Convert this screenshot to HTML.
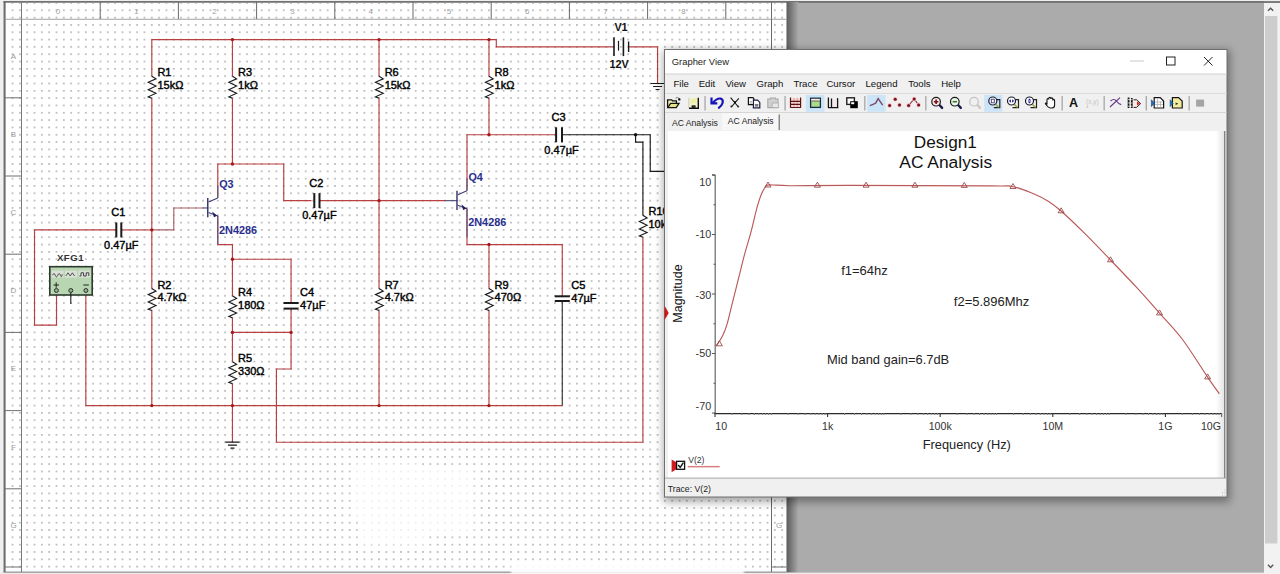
<!DOCTYPE html>
<html><head><meta charset="utf-8"><style>
html,body{margin:0;padding:0;width:1280px;height:574px;overflow:hidden;background:#ababab;}
svg{display:block;}
text{font-family:"Liberation Sans", sans-serif;}
</style></head><body>
<svg width="1280" height="574" viewBox="0 0 1280 574">
<rect x="0" y="0" width="1280" height="574" fill="#ababab"/>
<rect x="0" y="0" width="1264" height="1.1" fill="#efefef"/>
<rect x="0" y="0" width="3.6" height="574" fill="#f0f0f0"/>
<rect x="3.6" y="1.1" width="1260.4" height="1.7" fill="#6c6c6c"/>
<rect x="3.6" y="2.8" width="783" height="569.8" fill="#ffffff"/>
<defs><pattern id="dots" patternUnits="userSpaceOnUse" x="1.54" y="-0.66" width="7.33" height="7.32"><rect x="3.12" y="3.11" width="1.05" height="1.05" fill="#404040"/></pattern></defs>
<rect x="6" y="3" width="780.6" height="568.6" fill="url(#dots)"/>
<rect x="3.6" y="1.1" width="2" height="572" fill="#6c6c6c"/>
<rect x="3.6" y="571.6" width="783" height="1.4" fill="#7a7a7a"/>
<rect x="771" y="2" width="1" height="570" fill="#6a6a6a"/>
<rect x="21" y="2" width="1" height="570" fill="#7a7a7a"/>
<rect x="4" y="18.8" width="782" height="0.8" fill="#8a8a8a"/>
<rect x="99.7" y="2" width="1" height="17" fill="#6a6a6a"/>
<rect x="177.9" y="2" width="1" height="17" fill="#6a6a6a"/>
<rect x="256.1" y="2" width="1" height="17" fill="#6a6a6a"/>
<rect x="334.3" y="2" width="1" height="17" fill="#6a6a6a"/>
<rect x="412.5" y="2" width="1" height="17" fill="#6a6a6a"/>
<rect x="490.7" y="2" width="1" height="17" fill="#6a6a6a"/>
<rect x="568.9" y="2" width="1" height="17" fill="#6a6a6a"/>
<rect x="647.1" y="2" width="1" height="17" fill="#6a6a6a"/>
<rect x="725.3" y="2" width="1" height="17" fill="#6a6a6a"/>
<rect x="4" y="97.3" width="17.5" height="1" fill="#707070"/>
<rect x="771.5" y="97.3" width="15" height="1" fill="#707070"/>
<rect x="4" y="175.5" width="17.5" height="1" fill="#707070"/>
<rect x="771.5" y="175.5" width="15" height="1" fill="#707070"/>
<rect x="4" y="253.7" width="17.5" height="1" fill="#707070"/>
<rect x="771.5" y="253.7" width="15" height="1" fill="#707070"/>
<rect x="4" y="331.9" width="17.5" height="1" fill="#707070"/>
<rect x="771.5" y="331.9" width="15" height="1" fill="#707070"/>
<rect x="4" y="410.1" width="17.5" height="1" fill="#707070"/>
<rect x="771.5" y="410.1" width="15" height="1" fill="#707070"/>
<rect x="4" y="488.3" width="17.5" height="1" fill="#707070"/>
<rect x="771.5" y="488.3" width="15" height="1" fill="#707070"/>
<rect x="4" y="566.5" width="17.5" height="1" fill="#707070"/>
<rect x="771.5" y="566.5" width="15" height="1" fill="#707070"/>
<text x="58" y="14" font-size="8" fill="#a0a0a0" text-anchor="middle" font-family="'Liberation Sans', sans-serif">0</text>
<text x="136.2" y="14" font-size="8" fill="#a0a0a0" text-anchor="middle" font-family="'Liberation Sans', sans-serif">1</text>
<text x="214.4" y="14" font-size="8" fill="#a0a0a0" text-anchor="middle" font-family="'Liberation Sans', sans-serif">2</text>
<text x="292.6" y="14" font-size="8" fill="#a0a0a0" text-anchor="middle" font-family="'Liberation Sans', sans-serif">3</text>
<text x="370.8" y="14" font-size="8" fill="#a0a0a0" text-anchor="middle" font-family="'Liberation Sans', sans-serif">4</text>
<text x="449" y="14" font-size="8" fill="#a0a0a0" text-anchor="middle" font-family="'Liberation Sans', sans-serif">5</text>
<text x="527.2" y="14" font-size="8" fill="#a0a0a0" text-anchor="middle" font-family="'Liberation Sans', sans-serif">6</text>
<text x="605.4" y="14" font-size="8" fill="#a0a0a0" text-anchor="middle" font-family="'Liberation Sans', sans-serif">7</text>
<text x="683.6" y="14" font-size="8" fill="#a0a0a0" text-anchor="middle" font-family="'Liberation Sans', sans-serif">8</text>
<text x="13.5" y="58.5" font-size="8" fill="#9a9a9a" text-anchor="middle" font-family="'Liberation Sans', sans-serif">A</text>
<text x="779" y="58.5" font-size="8" fill="#9a9a9a" text-anchor="middle" font-family="'Liberation Sans', sans-serif">A</text>
<text x="13.5" y="136.7" font-size="8" fill="#9a9a9a" text-anchor="middle" font-family="'Liberation Sans', sans-serif">B</text>
<text x="779" y="136.7" font-size="8" fill="#9a9a9a" text-anchor="middle" font-family="'Liberation Sans', sans-serif">B</text>
<text x="13.5" y="214.9" font-size="8" fill="#9a9a9a" text-anchor="middle" font-family="'Liberation Sans', sans-serif">C</text>
<text x="779" y="214.9" font-size="8" fill="#9a9a9a" text-anchor="middle" font-family="'Liberation Sans', sans-serif">C</text>
<text x="13.5" y="293.1" font-size="8" fill="#9a9a9a" text-anchor="middle" font-family="'Liberation Sans', sans-serif">D</text>
<text x="779" y="293.1" font-size="8" fill="#9a9a9a" text-anchor="middle" font-family="'Liberation Sans', sans-serif">D</text>
<text x="13.5" y="371.3" font-size="8" fill="#9a9a9a" text-anchor="middle" font-family="'Liberation Sans', sans-serif">E</text>
<text x="779" y="371.3" font-size="8" fill="#9a9a9a" text-anchor="middle" font-family="'Liberation Sans', sans-serif">E</text>
<text x="13.5" y="449.5" font-size="8" fill="#9a9a9a" text-anchor="middle" font-family="'Liberation Sans', sans-serif">F</text>
<text x="779" y="449.5" font-size="8" fill="#9a9a9a" text-anchor="middle" font-family="'Liberation Sans', sans-serif">F</text>
<text x="13.5" y="527.7" font-size="8" fill="#9a9a9a" text-anchor="middle" font-family="'Liberation Sans', sans-serif">G</text>
<text x="779" y="527.7" font-size="8" fill="#9a9a9a" text-anchor="middle" font-family="'Liberation Sans', sans-serif">G</text>
<defs><linearGradient id="shr" x1="0" x2="1" y1="0" y2="0"><stop offset="0" stop-color="#5c5c5c"/><stop offset="1" stop-color="#ababab"/></linearGradient></defs>
<rect x="786.6" y="2" width="12" height="570.6" fill="url(#shr)"/>
<rect x="0" y="572.6" width="1264" height="1.4" fill="#ececec"/>
<path d="M151.8 76.2 L151.8 39.6 L496.31 39.6 L496.31 46.92 L613.59 46.92" fill="none" stroke="#b84040" stroke-width="1.15" stroke-linejoin="miter"/>
<path d="M628.25 46.92 L657.57 46.92 L657.57 83.52" fill="none" stroke="#b84040" stroke-width="1.15" stroke-linejoin="miter"/>
<path d="M151.8 98.16 L151.8 288.48" fill="none" stroke="#b84040" stroke-width="1.15" stroke-linejoin="miter"/>
<path d="M151.8 310.44 L151.8 405.6" fill="none" stroke="#b84040" stroke-width="1.15" stroke-linejoin="miter"/>
<path d="M232.43 39.6 L232.43 76.2" fill="none" stroke="#b84040" stroke-width="1.15" stroke-linejoin="miter"/>
<path d="M232.43 98.16 L232.43 164.04" fill="none" stroke="#b84040" stroke-width="1.15" stroke-linejoin="miter"/>
<path d="M217.77 197.8 L217.77 164.04 L283.74 164.04 L283.74 200.64 L311.5 200.64" fill="none" stroke="#b84040" stroke-width="1.15" stroke-linejoin="miter"/>
<path d="M319.5 200.64 L445 200.64" fill="none" stroke="#b84040" stroke-width="1.15" stroke-linejoin="miter"/>
<path d="M445 200.64 L457.5 200.64" fill="none" stroke="#50507a" stroke-width="1.15" stroke-linejoin="miter"/>
<path d="M151.8 229.92 L173.79 229.92 L173.79 207.96 L203.11 207.96" fill="none" stroke="#a86068" stroke-width="1.15" stroke-linejoin="miter"/>
<path d="M203.11 207.96 L208.3 207.96" fill="none" stroke="#50507a" stroke-width="1.15" stroke-linejoin="miter"/>
<path d="M217.77 215.8 L217.77 244.56 L232.43 244.56 L232.43 259.2 L291.07 259.2 L291.07 303" fill="none" stroke="#b84040" stroke-width="1.15" stroke-linejoin="miter"/>
<path d="M291.07 308.6 L291.07 332.4 L232.43 332.4" fill="none" stroke="#b84040" stroke-width="1.15" stroke-linejoin="miter"/>
<path d="M232.43 259.2 L232.43 295.8" fill="none" stroke="#b84040" stroke-width="1.15" stroke-linejoin="miter"/>
<path d="M232.43 317.76 L232.43 361.68" fill="none" stroke="#b84040" stroke-width="1.15" stroke-linejoin="miter"/>
<path d="M232.43 383.64 L232.43 442.2" fill="none" stroke="#b84040" stroke-width="1.15" stroke-linejoin="miter"/>
<path d="M291.07 332.4 L291.07 369 L276.41 369 L276.41 442.2 L642.91 442.2 L642.91 237.24" fill="none" stroke="#b84040" stroke-width="1.15" stroke-linejoin="miter"/>
<path d="M85.83 292.5 L85.83 405.6 L562.28 405.6" fill="none" stroke="#b84040" stroke-width="1.15" stroke-linejoin="miter"/>
<path d="M56.51 292.5 L56.51 325.08 L34.52 325.08 L34.52 229.92 L116.3 229.92" fill="none" stroke="#b84040" stroke-width="1.15" stroke-linejoin="miter"/>
<path d="M121.3 229.92 L151.8 229.92" fill="none" stroke="#b84040" stroke-width="1.15" stroke-linejoin="miter"/>
<path d="M379.03 39.6 L379.03 76.2" fill="none" stroke="#b84040" stroke-width="1.15" stroke-linejoin="miter"/>
<path d="M379.03 98.16 L379.03 288.48" fill="none" stroke="#b84040" stroke-width="1.15" stroke-linejoin="miter"/>
<path d="M379.03 310.44 L379.03 405.6" fill="none" stroke="#b84040" stroke-width="1.15" stroke-linejoin="miter"/>
<path d="M488.98 39.6 L488.98 76.2" fill="none" stroke="#b84040" stroke-width="1.15" stroke-linejoin="miter"/>
<path d="M488.98 98.16 L488.98 134.76" fill="none" stroke="#b84040" stroke-width="1.15" stroke-linejoin="miter"/>
<path d="M466.99 190.5 L466.99 134.76 L556.1 134.76" fill="none" stroke="#b84040" stroke-width="1.15" stroke-linejoin="miter"/>
<path d="M562 134.76 L650.24 134.76 L650.24 171.36 L679.56 171.36" fill="none" stroke="#1a1a1a" stroke-width="1.15" stroke-linejoin="miter"/>
<path d="M635.58 134.76 L635.58 142.08 L642.91 142.08 L642.91 215.28" fill="none" stroke="#1a1a1a" stroke-width="1.15" stroke-linejoin="miter"/>
<path d="M466.99 208.5 L466.99 244.56 L562.28 244.56 L562.28 296.3" fill="none" stroke="#b84040" stroke-width="1.15" stroke-linejoin="miter"/>
<path d="M562.28 301 L562.28 405.6" fill="none" stroke="#3a3030" stroke-width="1.15" stroke-linejoin="miter"/>
<path d="M488.98 244.56 L488.98 288.48" fill="none" stroke="#b84040" stroke-width="1.15" stroke-linejoin="miter"/>
<path d="M488.98 310.44 L488.98 405.6" fill="none" stroke="#b84040" stroke-width="1.15" stroke-linejoin="miter"/>
<circle cx="232.43" cy="39.6" r="1.7" fill="#a81818"/>
<circle cx="379.03" cy="39.6" r="1.7" fill="#a81818"/>
<circle cx="488.98" cy="39.6" r="1.7" fill="#a81818"/>
<circle cx="232.43" cy="164.04" r="1.7" fill="#a81818"/>
<circle cx="151.8" cy="229.92" r="1.7" fill="#a81818"/>
<circle cx="379.03" cy="200.64" r="1.7" fill="#a81818"/>
<circle cx="488.98" cy="134.76" r="1.7" fill="#a81818"/>
<circle cx="488.98" cy="244.56" r="1.7" fill="#a81818"/>
<circle cx="232.43" cy="259.2" r="1.7" fill="#a81818"/>
<circle cx="232.43" cy="332.4" r="1.7" fill="#a81818"/>
<circle cx="291.07" cy="332.4" r="1.7" fill="#a81818"/>
<circle cx="151.8" cy="405.6" r="1.7" fill="#a81818"/>
<circle cx="232.43" cy="405.6" r="1.7" fill="#a81818"/>
<circle cx="379.03" cy="405.6" r="1.7" fill="#a81818"/>
<circle cx="488.98" cy="405.6" r="1.7" fill="#a81818"/>
<circle cx="635.58" cy="134.76" r="1.7" fill="#111"/>
<path d="M151.8 76.2 L156 78.84 L148.2 82.35 L156 86.09 L148.2 89.82 L156 93.34 L148.2 96.86 L151.8 98.18" fill="none" stroke="#1a1a1a" stroke-width="1.1" stroke-linejoin="miter"/>
<text x="157.4" y="76.4" font-size="11" fill="#000" text-anchor="start" font-weight="normal" font-family="'Liberation Sans', sans-serif" stroke="#000" stroke-width="0.4">R1</text>
<text x="157.4" y="89.2" font-size="11" fill="#000" text-anchor="start" font-weight="normal" font-family="'Liberation Sans', sans-serif" stroke="#000" stroke-width="0.4">15k&#937;</text>
<path d="M232.43 76.2 L236.63 78.84 L228.83 82.35 L236.63 86.09 L228.83 89.82 L236.63 93.34 L228.83 96.86 L232.43 98.18" fill="none" stroke="#1a1a1a" stroke-width="1.1" stroke-linejoin="miter"/>
<text x="238.03" y="76.4" font-size="11" fill="#000" text-anchor="start" font-weight="normal" font-family="'Liberation Sans', sans-serif" stroke="#000" stroke-width="0.4">R3</text>
<text x="238.03" y="89.2" font-size="11" fill="#000" text-anchor="start" font-weight="normal" font-family="'Liberation Sans', sans-serif" stroke="#000" stroke-width="0.4">1k&#937;</text>
<path d="M379.03 76.2 L383.23 78.84 L375.43 82.35 L383.23 86.09 L375.43 89.82 L383.23 93.34 L375.43 96.86 L379.03 98.18" fill="none" stroke="#1a1a1a" stroke-width="1.1" stroke-linejoin="miter"/>
<text x="384.63" y="76.4" font-size="11" fill="#000" text-anchor="start" font-weight="normal" font-family="'Liberation Sans', sans-serif" stroke="#000" stroke-width="0.4">R6</text>
<text x="384.63" y="89.2" font-size="11" fill="#000" text-anchor="start" font-weight="normal" font-family="'Liberation Sans', sans-serif" stroke="#000" stroke-width="0.4">15k&#937;</text>
<path d="M488.98 76.2 L493.18 78.84 L485.38 82.35 L493.18 86.09 L485.38 89.82 L493.18 93.34 L485.38 96.86 L488.98 98.18" fill="none" stroke="#1a1a1a" stroke-width="1.1" stroke-linejoin="miter"/>
<text x="494.58" y="76.4" font-size="11" fill="#000" text-anchor="start" font-weight="normal" font-family="'Liberation Sans', sans-serif" stroke="#000" stroke-width="0.4">R8</text>
<text x="494.58" y="89.2" font-size="11" fill="#000" text-anchor="start" font-weight="normal" font-family="'Liberation Sans', sans-serif" stroke="#000" stroke-width="0.4">1k&#937;</text>
<path d="M151.8 288.48 L156 291.12 L148.2 294.63 L156 298.37 L148.2 302.1 L156 305.62 L148.2 309.14 L151.8 310.46" fill="none" stroke="#1a1a1a" stroke-width="1.1" stroke-linejoin="miter"/>
<text x="157.4" y="288.68" font-size="11" fill="#000" text-anchor="start" font-weight="normal" font-family="'Liberation Sans', sans-serif" stroke="#000" stroke-width="0.4">R2</text>
<text x="157.4" y="301.48" font-size="11" fill="#000" text-anchor="start" font-weight="normal" font-family="'Liberation Sans', sans-serif" stroke="#000" stroke-width="0.4">4.7k&#937;</text>
<path d="M379.03 288.48 L383.23 291.12 L375.43 294.63 L383.23 298.37 L375.43 302.1 L383.23 305.62 L375.43 309.14 L379.03 310.46" fill="none" stroke="#1a1a1a" stroke-width="1.1" stroke-linejoin="miter"/>
<text x="384.63" y="288.68" font-size="11" fill="#000" text-anchor="start" font-weight="normal" font-family="'Liberation Sans', sans-serif" stroke="#000" stroke-width="0.4">R7</text>
<text x="384.63" y="301.48" font-size="11" fill="#000" text-anchor="start" font-weight="normal" font-family="'Liberation Sans', sans-serif" stroke="#000" stroke-width="0.4">4.7k&#937;</text>
<path d="M488.98 288.48 L493.18 291.12 L485.38 294.63 L493.18 298.37 L485.38 302.1 L493.18 305.62 L485.38 309.14 L488.98 310.46" fill="none" stroke="#1a1a1a" stroke-width="1.1" stroke-linejoin="miter"/>
<text x="494.58" y="288.68" font-size="11" fill="#000" text-anchor="start" font-weight="normal" font-family="'Liberation Sans', sans-serif" stroke="#000" stroke-width="0.4">R9</text>
<text x="494.58" y="301.48" font-size="11" fill="#000" text-anchor="start" font-weight="normal" font-family="'Liberation Sans', sans-serif" stroke="#000" stroke-width="0.4">470&#937;</text>
<path d="M232.43 295.8 L236.63 298.44 L228.83 301.95 L236.63 305.69 L228.83 309.42 L236.63 312.94 L228.83 316.46 L232.43 317.78" fill="none" stroke="#1a1a1a" stroke-width="1.1" stroke-linejoin="miter"/>
<text x="238.03" y="296" font-size="11" fill="#000" text-anchor="start" font-weight="normal" font-family="'Liberation Sans', sans-serif" stroke="#000" stroke-width="0.4">R4</text>
<text x="238.03" y="308.8" font-size="11" fill="#000" text-anchor="start" font-weight="normal" font-family="'Liberation Sans', sans-serif" stroke="#000" stroke-width="0.4">180&#937;</text>
<path d="M232.43 361.68 L236.63 364.32 L228.83 367.83 L236.63 371.57 L228.83 375.3 L236.63 378.82 L228.83 382.34 L232.43 383.66" fill="none" stroke="#1a1a1a" stroke-width="1.1" stroke-linejoin="miter"/>
<text x="238.03" y="361.88" font-size="11" fill="#000" text-anchor="start" font-weight="normal" font-family="'Liberation Sans', sans-serif" stroke="#000" stroke-width="0.4">R5</text>
<text x="238.03" y="374.68" font-size="11" fill="#000" text-anchor="start" font-weight="normal" font-family="'Liberation Sans', sans-serif" stroke="#000" stroke-width="0.4">330&#937;</text>
<path d="M642.91 215.28 L647.11 217.92 L639.31 221.43 L647.11 225.17 L639.31 228.9 L647.11 232.42 L639.31 235.94 L642.91 237.25" fill="none" stroke="#1a1a1a" stroke-width="1.1" stroke-linejoin="miter"/>
<text x="648.51" y="215.48" font-size="11" fill="#000" text-anchor="start" font-weight="normal" font-family="'Liberation Sans', sans-serif" stroke="#000" stroke-width="0.4">R10</text>
<text x="648.51" y="228.28" font-size="11" fill="#000" text-anchor="start" font-weight="normal" font-family="'Liberation Sans', sans-serif" stroke="#000" stroke-width="0.4">10k</text>
<rect x="115.3" y="222.42" width="2" height="15" fill="#1a1a1a"/>
<rect x="120.3" y="222.42" width="2" height="15" fill="#1a1a1a"/>
<text x="118.3" y="216.12" font-size="11" fill="#000" text-anchor="middle" font-weight="normal" font-family="'Liberation Sans', sans-serif" stroke="#000" stroke-width="0.4">C1</text>
<text x="121.3" y="248.72" font-size="11" fill="#000" text-anchor="middle" font-weight="normal" font-family="'Liberation Sans', sans-serif" stroke="#000" stroke-width="0.4">0.47&#181;F</text>
<rect x="313.3" y="193.14" width="2" height="15" fill="#1a1a1a"/>
<rect x="318.5" y="193.14" width="2" height="15" fill="#1a1a1a"/>
<text x="316.4" y="186.84" font-size="11" fill="#000" text-anchor="middle" font-weight="normal" font-family="'Liberation Sans', sans-serif" stroke="#000" stroke-width="0.4">C2</text>
<text x="319.4" y="219.44" font-size="11" fill="#000" text-anchor="middle" font-weight="normal" font-family="'Liberation Sans', sans-serif" stroke="#000" stroke-width="0.4">0.47&#181;F</text>
<rect x="555.1" y="127.26" width="2" height="15" fill="#1a1a1a"/>
<rect x="561" y="127.26" width="2" height="15" fill="#1a1a1a"/>
<text x="558.55" y="120.96" font-size="11" fill="#000" text-anchor="middle" font-weight="normal" font-family="'Liberation Sans', sans-serif" stroke="#000" stroke-width="0.4">C3</text>
<text x="561.55" y="153.56" font-size="11" fill="#000" text-anchor="middle" font-weight="normal" font-family="'Liberation Sans', sans-serif" stroke="#000" stroke-width="0.4">0.47&#181;F</text>
<rect x="283.57" y="302" width="15" height="2" fill="#1a1a1a"/>
<rect x="283.57" y="307.6" width="15" height="2" fill="#1a1a1a"/>
<text x="300.07" y="296.2" font-size="11" fill="#000" text-anchor="start" font-weight="normal" font-family="'Liberation Sans', sans-serif" stroke="#000" stroke-width="0.4">C4</text>
<text x="300.07" y="309.4" font-size="11" fill="#000" text-anchor="start" font-weight="normal" font-family="'Liberation Sans', sans-serif" stroke="#000" stroke-width="0.4">47&#181;F</text>
<rect x="554.78" y="295.3" width="15" height="2" fill="#1a1a1a"/>
<rect x="554.78" y="300" width="15" height="2" fill="#1a1a1a"/>
<text x="571.28" y="289.05" font-size="11" fill="#000" text-anchor="start" font-weight="normal" font-family="'Liberation Sans', sans-serif" stroke="#000" stroke-width="0.4">C5</text>
<text x="571.28" y="302.25" font-size="11" fill="#000" text-anchor="start" font-weight="normal" font-family="'Liberation Sans', sans-serif" stroke="#000" stroke-width="0.4">47&#181;F</text>
<path d="M217.77 197.96 V185.96" fill="none" stroke="#55557e" stroke-width="1.1"/>
<path d="M217.77 215.96 V243.96" fill="none" stroke="#55557e" stroke-width="1.1"/>
<path d="M207.77 197.96 V217.26" stroke="#2e2e68" stroke-width="1.4"/>
<path d="M208.57 202.06 L217.77 197.96" fill="none" stroke="#3e3e74" stroke-width="1.1"/>
<path d="M208.57 212.46 L217.77 215.96" fill="none" stroke="#3e3e74" stroke-width="1.1"/>
<path d="M217.17 215.76 L212.17 211.56 L213.97 217.36 Z" fill="#1e1e60"/>
<text x="219.17" y="187.96" font-size="10.8" fill="#2a2f8f" text-anchor="start" font-weight="bold" font-family="'Liberation Sans', sans-serif" >Q3</text>
<text x="218.97" y="233.76" font-size="10.9" fill="#2a2f8f" text-anchor="start" font-weight="bold" font-family="'Liberation Sans', sans-serif" >2N4286</text>
<path d="M466.99 190.64 V178.64" fill="none" stroke="#55557e" stroke-width="1.1"/>
<path d="M466.99 208.64 V236.64" fill="none" stroke="#55557e" stroke-width="1.1"/>
<path d="M456.99 190.64 V209.94" stroke="#2e2e68" stroke-width="1.4"/>
<path d="M457.79 194.74 L466.99 190.64" fill="none" stroke="#3e3e74" stroke-width="1.1"/>
<path d="M457.79 205.14 L466.99 208.64" fill="none" stroke="#3e3e74" stroke-width="1.1"/>
<path d="M466.39 208.44 L461.39 204.24 L463.19 210.04 Z" fill="#1e1e60"/>
<text x="468.39" y="180.64" font-size="10.8" fill="#2a2f8f" text-anchor="start" font-weight="bold" font-family="'Liberation Sans', sans-serif" >Q4</text>
<text x="468.19" y="226.44" font-size="10.9" fill="#2a2f8f" text-anchor="start" font-weight="bold" font-family="'Liberation Sans', sans-serif" >2N4286</text>
<path d="M614 37.3 V56.1" stroke="#1a1a1a" stroke-width="1.6"/>
<path d="M618.5 40.8 V50.6" stroke="#1a1a1a" stroke-width="1.2"/>
<path d="M623.4 37.3 V56.1" stroke="#1a1a1a" stroke-width="1.6"/>
<path d="M628.6 41.5 V52" stroke="#1a1a1a" stroke-width="1.4"/>
<text x="621" y="31" font-size="10.8" fill="#111" text-anchor="middle" font-weight="bold" font-family="'Liberation Sans', sans-serif" >V1</text>
<text x="619" y="67.7" font-size="10.8" fill="#111" text-anchor="middle" font-weight="bold" font-family="'Liberation Sans', sans-serif" >12V</text>
<path d="M650.57 83.52 H664.57 M653.07 86.52 H662.07 M655.57 89.52 H659.57" stroke="#1a1a1a" stroke-width="1.2"/>
<path d="M225.43 442.2 H239.43 M227.93 445.2 H236.93 M230.43 448.2 H234.43" stroke="#1a1a1a" stroke-width="1.2"/>
<rect x="49.8" y="266.7" width="42.4" height="28.3" fill="#b9d6b2" stroke="#2e3a2e" stroke-width="1.6"/>
<rect x="51.5" y="270.6" width="12" height="7" fill="#d9e0d6"/>
<rect x="65" y="270.6" width="12" height="7" fill="#d9e0d6"/>
<rect x="78.5" y="270.6" width="12" height="7" fill="#d9e0d6"/>
<path d="M52.6 275.2 q1.3 -3.4 2.6 0 t2.6 0 t2.6 0 t1.8 -1" fill="none" stroke="#444" stroke-width="0.9"/>
<path d="M65.8 276 l2.2 -3.2 l2.2 3.2 l2.2 -3.2 l2.2 3.2" fill="none" stroke="#444" stroke-width="0.9"/>
<path d="M79.4 276 h1.6 v-3.2 h2.6 v3.2 h2.6 v-3.2 h2.6 v3.2" fill="none" stroke="#333" stroke-width="0.9"/>
<circle cx="56.4" cy="290.5" r="2" fill="#8fb089" stroke="#333" stroke-width="1"/>
<circle cx="70.8" cy="290.5" r="2" fill="#8fb089" stroke="#333" stroke-width="1"/>
<circle cx="85.9" cy="290.5" r="2" fill="#8fb089" stroke="#333" stroke-width="1"/>
<path d="M53.5 285 h5.5 M56.2 282.3 v5.5 M83.3 285 h5.5" stroke="#222" stroke-width="1"/>
<path d="M56.4 292.5 V292.48 M70.8 292.5 V304 M85.9 292.5 V292.48" stroke="#222" stroke-width="1.1"/>
<text x="70.5" y="260.5" font-size="9.6" fill="#333" text-anchor="middle" font-weight="bold" font-family="'Liberation Serif', serif" letter-spacing="0.5">XFG1</text>
<defs><filter id="soft" x="-5%" y="-5%" width="110%" height="110%"><feGaussianBlur stdDeviation="1.2"/></filter></defs>
<path d="M356 463.4 H422 V469 H474 V532.4 H427 V545 H358 V517 H351.5 V470 Z" fill="#ffffff" opacity="0.75" filter="url(#soft)"/>
<rect x="511" y="563" width="233" height="11" fill="#ffffff" opacity="0.9" filter="url(#soft)"/>
<rect x="1264" y="2.8" width="16" height="571.2" fill="#f2f2f2"/><rect x="1264" y="1.1" width="16" height="1.7" fill="#6c6c6c"/><rect x="1264" y="0" width="16" height="1.1" fill="#efefef"/>
<rect x="1265" y="16" width="12.3" height="527.5" fill="#cdcdcd"/>
<path d="M1268 10.8 L1270.6 8.2 L1273.2 10.8" fill="none" stroke="#555" stroke-width="1.4"/>
<path d="M1268 564.8 L1270.6 567.4 L1273.2 564.8" fill="none" stroke="#555" stroke-width="1.4"/>
<defs><filter id="blur" x="-10%" y="-10%" width="120%" height="120%"><feGaussianBlur stdDeviation="4"/></filter></defs>
<rect x="663.5" y="50" width="566.5" height="452" fill="#000" opacity="0.35" filter="url(#blur)"/>
<rect x="664.5" y="49" width="562.5" height="448" fill="#f0f0f0"/>
<rect x="664.5" y="49" width="562.5" height="25" fill="#ffffff"/>
<rect x="664.5" y="49.5" width="562.5" height="447.5" fill="none" stroke="#6f6f6f" stroke-width="1"/>
<text x="671.8" y="65" font-size="9.4" fill="#222" text-anchor="start" font-weight="normal" font-family="'Liberation Sans', sans-serif" >Grapher View</text>
<path d="M1130 61 H1144" stroke="#c8c8c8" stroke-width="1"/>
<rect x="1166.5" y="57" width="8.5" height="8" fill="none" stroke="#222" stroke-width="1"/>
<path d="M1204 57 L1212.5 65.5 M1212.5 57 L1204 65.5" stroke="#222" stroke-width="1"/>
<rect x="665" y="73.6" width="562" height="0.8" fill="#c8c8c8"/>
<rect x="665" y="93" width="562" height="0.8" fill="#d6d6d6"/>
<rect x="665" y="112" width="562" height="0.8" fill="#d0d0d0"/>
<text x="673.4" y="87.2" font-size="9.6" fill="#111" text-anchor="start" font-weight="normal" font-family="'Liberation Sans', sans-serif" >File</text>
<text x="698.7" y="87.2" font-size="9.6" fill="#111" text-anchor="start" font-weight="normal" font-family="'Liberation Sans', sans-serif" >Edit</text>
<text x="725.4" y="87.2" font-size="9.6" fill="#111" text-anchor="start" font-weight="normal" font-family="'Liberation Sans', sans-serif" >View</text>
<text x="756.6" y="87.2" font-size="9.6" fill="#111" text-anchor="start" font-weight="normal" font-family="'Liberation Sans', sans-serif" >Graph</text>
<text x="793.4" y="87.2" font-size="9.6" fill="#111" text-anchor="start" font-weight="normal" font-family="'Liberation Sans', sans-serif" >Trace</text>
<text x="826.4" y="87.2" font-size="9.6" fill="#111" text-anchor="start" font-weight="normal" font-family="'Liberation Sans', sans-serif" >Cursor</text>
<text x="865.5" y="87.2" font-size="9.6" fill="#111" text-anchor="start" font-weight="normal" font-family="'Liberation Sans', sans-serif" >Legend</text>
<text x="908.2" y="87.2" font-size="9.6" fill="#111" text-anchor="start" font-weight="normal" font-family="'Liberation Sans', sans-serif" >Tools</text>
<text x="941.2" y="87.2" font-size="9.6" fill="#111" text-anchor="start" font-weight="normal" font-family="'Liberation Sans', sans-serif" >Help</text>
<text x="672" y="125.6" font-size="8.6" fill="#222" text-anchor="start" font-weight="normal" font-family="'Liberation Sans', sans-serif" >AC Analysis</text>
<rect x="722" y="113" width="57" height="17" fill="#f7f7f7"/>
<text x="727.8" y="124.4" font-size="8.6" fill="#222" text-anchor="start" font-weight="normal" font-family="'Liberation Sans', sans-serif" >AC Analysis</text>
<rect x="778.6" y="114.5" width="1.2" height="15.5" fill="#707070"/>
<rect x="665.5" y="131" width="558" height="347" fill="#ffffff"/>
<rect x="665.5" y="131" width="2.6" height="347" fill="#f0f0f0"/>
<defs><linearGradient id="inr" x1="0" x2="1"><stop offset="0" stop-color="#fff"/><stop offset="1" stop-color="#e4e4e4"/></linearGradient></defs>
<rect x="1216" y="131" width="8.4" height="347" fill="url(#inr)"/>
<rect x="1224.2" y="131" width="1.1" height="347" fill="#6a6a6a"/>
<rect x="665" y="477.6" width="562" height="1" fill="#a8a8a8"/>
<text x="667.8" y="492.2" font-size="8.7" fill="#222" text-anchor="start" font-weight="normal" font-family="'Liberation Sans', sans-serif" >Trace: V(2)</text>
<rect x="1222" y="494.5" width="1" height="1" fill="#b8b8b8"/>
<rect x="1224.5" y="494.5" width="1" height="1" fill="#b8b8b8"/>
<rect x="1224.5" y="492" width="1" height="1" fill="#b8b8b8"/>
<rect x="1222" y="492" width="1" height="1" fill="#b8b8b8"/>
<rect x="1224.5" y="489.5" width="1" height="1" fill="#b8b8b8"/>
<text x="945.3" y="147.9" font-size="17.2" fill="#111" text-anchor="middle" font-weight="normal" font-family="'Liberation Sans', sans-serif" >Design1</text>
<text x="945.7" y="167.7" font-size="17.4" fill="#111" text-anchor="middle" font-weight="normal" font-family="'Liberation Sans', sans-serif" >AC Analysis</text>
<path d="M715.2 175 V413.6" fill="none" stroke="#666" stroke-width="1.2"/><path d="M714.6 413.6 H1221" fill="none" stroke="#2a2a2a" stroke-width="1.2"/>
<path d="M712 175 H715.2" stroke="#555" stroke-width="1.2"/>
<path d="M712 175 H715.2" stroke="#555" stroke-width="1"/>
<path d="M712 234.5 H715.2" stroke="#555" stroke-width="1"/>
<path d="M712 294 H715.2" stroke="#555" stroke-width="1"/>
<path d="M712 353.5 H715.2" stroke="#555" stroke-width="1"/>
<path d="M712 413 H715.2" stroke="#555" stroke-width="1"/>
<path d="M713.5 204.75 H715.2" stroke="#555" stroke-width="1"/>
<path d="M713.5 264.25 H715.2" stroke="#555" stroke-width="1"/>
<path d="M713.5 323.75 H715.2" stroke="#555" stroke-width="1"/>
<path d="M713.5 383.25 H715.2" stroke="#555" stroke-width="1"/>
<text x="711.2" y="185.6" font-size="10.8" fill="#333" text-anchor="end" font-weight="normal" font-family="'Liberation Sans', sans-serif" >10</text>
<text x="711.2" y="238" font-size="10.8" fill="#333" text-anchor="end" font-weight="normal" font-family="'Liberation Sans', sans-serif" >-10</text>
<text x="711.2" y="298.5" font-size="10.8" fill="#333" text-anchor="end" font-weight="normal" font-family="'Liberation Sans', sans-serif" >-30</text>
<text x="711.2" y="357" font-size="10.8" fill="#333" text-anchor="end" font-weight="normal" font-family="'Liberation Sans', sans-serif" >-50</text>
<text x="711.2" y="410" font-size="10.8" fill="#333" text-anchor="end" font-weight="normal" font-family="'Liberation Sans', sans-serif" >-70</text>
<path d="M715 413 V417" stroke="#333" stroke-width="1.1"/>
<path d="M731.95 413 V415" stroke="#777" stroke-width="1"/>
<path d="M741.86 413 V415" stroke="#777" stroke-width="1"/>
<path d="M748.9 413 V415" stroke="#777" stroke-width="1"/>
<path d="M754.35 413 V415" stroke="#777" stroke-width="1"/>
<path d="M758.81 413 V415" stroke="#777" stroke-width="1"/>
<path d="M762.58 413 V415" stroke="#777" stroke-width="1"/>
<path d="M765.84 413 V415" stroke="#777" stroke-width="1"/>
<path d="M768.72 413 V415" stroke="#777" stroke-width="1"/>
<path d="M771.3 413 V415" stroke="#777" stroke-width="1"/>
<path d="M788.25 413 V415" stroke="#777" stroke-width="1"/>
<path d="M798.16 413 V415" stroke="#777" stroke-width="1"/>
<path d="M805.2 413 V415" stroke="#777" stroke-width="1"/>
<path d="M810.65 413 V415" stroke="#777" stroke-width="1"/>
<path d="M815.11 413 V415" stroke="#777" stroke-width="1"/>
<path d="M818.88 413 V415" stroke="#777" stroke-width="1"/>
<path d="M822.14 413 V415" stroke="#777" stroke-width="1"/>
<path d="M825.02 413 V415" stroke="#777" stroke-width="1"/>
<path d="M827.6 413 V417" stroke="#333" stroke-width="1.1"/>
<path d="M844.55 413 V415" stroke="#777" stroke-width="1"/>
<path d="M854.46 413 V415" stroke="#777" stroke-width="1"/>
<path d="M861.5 413 V415" stroke="#777" stroke-width="1"/>
<path d="M866.95 413 V415" stroke="#777" stroke-width="1"/>
<path d="M871.41 413 V415" stroke="#777" stroke-width="1"/>
<path d="M875.18 413 V415" stroke="#777" stroke-width="1"/>
<path d="M878.44 413 V415" stroke="#777" stroke-width="1"/>
<path d="M881.32 413 V415" stroke="#777" stroke-width="1"/>
<path d="M883.9 413 V415" stroke="#777" stroke-width="1"/>
<path d="M900.85 413 V415" stroke="#777" stroke-width="1"/>
<path d="M910.76 413 V415" stroke="#777" stroke-width="1"/>
<path d="M917.8 413 V415" stroke="#777" stroke-width="1"/>
<path d="M923.25 413 V415" stroke="#777" stroke-width="1"/>
<path d="M927.71 413 V415" stroke="#777" stroke-width="1"/>
<path d="M931.48 413 V415" stroke="#777" stroke-width="1"/>
<path d="M934.74 413 V415" stroke="#777" stroke-width="1"/>
<path d="M937.62 413 V415" stroke="#777" stroke-width="1"/>
<path d="M940.2 413 V417" stroke="#333" stroke-width="1.1"/>
<path d="M957.15 413 V415" stroke="#777" stroke-width="1"/>
<path d="M967.06 413 V415" stroke="#777" stroke-width="1"/>
<path d="M974.1 413 V415" stroke="#777" stroke-width="1"/>
<path d="M979.55 413 V415" stroke="#777" stroke-width="1"/>
<path d="M984.01 413 V415" stroke="#777" stroke-width="1"/>
<path d="M987.78 413 V415" stroke="#777" stroke-width="1"/>
<path d="M991.04 413 V415" stroke="#777" stroke-width="1"/>
<path d="M993.92 413 V415" stroke="#777" stroke-width="1"/>
<path d="M996.5 413 V415" stroke="#777" stroke-width="1"/>
<path d="M1013.45 413 V415" stroke="#777" stroke-width="1"/>
<path d="M1023.36 413 V415" stroke="#777" stroke-width="1"/>
<path d="M1030.4 413 V415" stroke="#777" stroke-width="1"/>
<path d="M1035.85 413 V415" stroke="#777" stroke-width="1"/>
<path d="M1040.31 413 V415" stroke="#777" stroke-width="1"/>
<path d="M1044.08 413 V415" stroke="#777" stroke-width="1"/>
<path d="M1047.34 413 V415" stroke="#777" stroke-width="1"/>
<path d="M1050.22 413 V415" stroke="#777" stroke-width="1"/>
<path d="M1052.8 413 V417" stroke="#333" stroke-width="1.1"/>
<path d="M1069.75 413 V415" stroke="#777" stroke-width="1"/>
<path d="M1079.66 413 V415" stroke="#777" stroke-width="1"/>
<path d="M1086.7 413 V415" stroke="#777" stroke-width="1"/>
<path d="M1092.15 413 V415" stroke="#777" stroke-width="1"/>
<path d="M1096.61 413 V415" stroke="#777" stroke-width="1"/>
<path d="M1100.38 413 V415" stroke="#777" stroke-width="1"/>
<path d="M1103.64 413 V415" stroke="#777" stroke-width="1"/>
<path d="M1106.52 413 V415" stroke="#777" stroke-width="1"/>
<path d="M1109.1 413 V415" stroke="#777" stroke-width="1"/>
<path d="M1126.05 413 V415" stroke="#777" stroke-width="1"/>
<path d="M1135.96 413 V415" stroke="#777" stroke-width="1"/>
<path d="M1143 413 V415" stroke="#777" stroke-width="1"/>
<path d="M1148.45 413 V415" stroke="#777" stroke-width="1"/>
<path d="M1152.91 413 V415" stroke="#777" stroke-width="1"/>
<path d="M1156.68 413 V415" stroke="#777" stroke-width="1"/>
<path d="M1159.94 413 V415" stroke="#777" stroke-width="1"/>
<path d="M1162.82 413 V415" stroke="#777" stroke-width="1"/>
<path d="M1165.4 413 V417" stroke="#333" stroke-width="1.1"/>
<path d="M1182.35 413 V415" stroke="#777" stroke-width="1"/>
<path d="M1192.26 413 V415" stroke="#777" stroke-width="1"/>
<path d="M1199.3 413 V415" stroke="#777" stroke-width="1"/>
<path d="M1204.75 413 V415" stroke="#777" stroke-width="1"/>
<path d="M1209.21 413 V415" stroke="#777" stroke-width="1"/>
<path d="M1212.98 413 V415" stroke="#777" stroke-width="1"/>
<path d="M1216.24 413 V415" stroke="#777" stroke-width="1"/>
<path d="M1219.12 413 V415" stroke="#777" stroke-width="1"/>
<path d="M1221.7 413 V417" stroke="#555" stroke-width="1"/>
<text x="715.3" y="430" font-size="10.6" fill="#333" text-anchor="start" font-weight="normal" font-family="'Liberation Sans', sans-serif" >10</text>
<text x="827.6" y="430" font-size="10.6" fill="#333" text-anchor="middle" font-weight="normal" font-family="'Liberation Sans', sans-serif" >1k</text>
<text x="940.2" y="430" font-size="10.6" fill="#333" text-anchor="middle" font-weight="normal" font-family="'Liberation Sans', sans-serif" >100k</text>
<text x="1052.8" y="430" font-size="10.6" fill="#333" text-anchor="middle" font-weight="normal" font-family="'Liberation Sans', sans-serif" >10M</text>
<text x="1165.4" y="430" font-size="10.6" fill="#333" text-anchor="middle" font-weight="normal" font-family="'Liberation Sans', sans-serif" >1G</text>
<text x="1221" y="430" font-size="10.6" fill="#333" text-anchor="end" font-weight="normal" font-family="'Liberation Sans', sans-serif" >10G</text>
<text x="966.8" y="448.6" font-size="12.8" fill="#222" text-anchor="middle" font-weight="normal" font-family="'Liberation Sans', sans-serif" >Frequency (Hz)</text>
<text x="681.8" y="322.7" font-size="12.5" fill="#111" text-anchor="start" font-weight="normal" font-family="'Liberation Sans', sans-serif" transform="rotate(-90 681.8 322.7)">Magnitude</text>
<text x="841.2" y="274.9" font-size="13" fill="#222" text-anchor="start" font-weight="normal" font-family="'Liberation Sans', sans-serif" >f1=64hz</text>
<text x="953.8" y="305.9" font-size="13" fill="#222" text-anchor="start" font-weight="normal" font-family="'Liberation Sans', sans-serif" >f2=5.896Mhz</text>
<text x="827" y="363.6" font-size="12.9" fill="#222" text-anchor="start" font-weight="normal" font-family="'Liberation Sans', sans-serif" >Mid band gain=6.7dB</text>
<path d="M715.2 346 C715.48 345.82 715.68 346.55 716.9 344.9 C718.12 343.25 720.78 339.65 722.5 336.1 C724.22 332.55 725.63 328.82 727.2 323.6 C728.77 318.38 730.07 312.12 731.9 304.8 C733.73 297.48 736.1 288.07 738.2 279.7 C740.3 271.33 742.4 262.43 744.5 254.6 C746.6 246.77 748.72 240.53 750.8 232.7 C752.88 224.87 755.18 214.13 757 207.6 C758.82 201.07 760.13 197.15 761.7 193.5 C763.27 189.85 764.57 187.12 766.4 185.7 C768.23 184.28 768.77 185 772.7 185 C776.63 185 777.12 185.63 790 185.7 C802.88 185.77 816.67 185.37 850 185.4 C883.33 185.43 962.83 185.68 990 185.9 C1017.17 186.12 1006.03 185.52 1013 186.7 C1019.97 187.88 1025.87 190.55 1031.8 193 C1037.73 195.45 1043.72 198.4 1048.6 201.4 C1053.48 204.4 1054.83 205.42 1061.1 211 C1067.37 216.58 1077.97 226.73 1086.2 234.9 C1094.43 243.07 1102.13 251.28 1110.5 260 C1118.87 268.72 1128.23 278.35 1136.4 287.2 C1144.57 296.05 1151.82 304.38 1159.5 313.1 C1167.18 321.82 1174.48 328.83 1182.5 339.5 C1190.52 350.17 1201.47 368.05 1207.6 377.1 C1213.73 386.15 1217.35 391.02 1219.3 393.8" fill="none" stroke="#bb5858" stroke-width="1.15"/>
<path d="M719.4 340.8 L722.4 345.8 L716.4 345.8 Z" fill="none" stroke="#9a4a4a" stroke-width="0.9"/>
<path d="M768 182 L771 187 L765 187 Z" fill="none" stroke="#9a4a4a" stroke-width="0.9"/>
<path d="M817.4 182.2 L820.4 187.2 L814.4 187.2 Z" fill="none" stroke="#9a4a4a" stroke-width="0.9"/>
<path d="M866.1 182.2 L869.1 187.2 L863.1 187.2 Z" fill="none" stroke="#9a4a4a" stroke-width="0.9"/>
<path d="M914.9 182.2 L917.9 187.2 L911.9 187.2 Z" fill="none" stroke="#9a4a4a" stroke-width="0.9"/>
<path d="M964.3 182.4 L967.3 187.4 L961.3 187.4 Z" fill="none" stroke="#9a4a4a" stroke-width="0.9"/>
<path d="M1013 183.5 L1016 188.5 L1010 188.5 Z" fill="none" stroke="#9a4a4a" stroke-width="0.9"/>
<path d="M1061.1 207.8 L1064.1 212.8 L1058.1 212.8 Z" fill="none" stroke="#9a4a4a" stroke-width="0.9"/>
<path d="M1110.5 256.8 L1113.5 261.8 L1107.5 261.8 Z" fill="none" stroke="#9a4a4a" stroke-width="0.9"/>
<path d="M1159.5 309.9 L1162.5 314.9 L1156.5 314.9 Z" fill="none" stroke="#9a4a4a" stroke-width="0.9"/>
<path d="M1207.6 373.9 L1210.6 378.9 L1204.6 378.9 Z" fill="none" stroke="#9a4a4a" stroke-width="0.9"/>
<path d="M664.6 305.7 L668.7 313 L664.6 320 Z" fill="#d01414"/>
<path d="M671.6 459.4 L676 462 L676 469.6 L671.6 472.2 Z" fill="#d01c1c"/>
<rect x="676.6" y="461.3" width="8" height="8" fill="#fff" stroke="#111" stroke-width="1.3"/>
<path d="M678.2 465 L680.2 467.4 L683.4 462.6" fill="none" stroke="#111" stroke-width="1.4"/>
<text x="688.2" y="463.4" font-size="8.6" fill="#333" text-anchor="start" font-weight="normal" font-family="'Liberation Sans', sans-serif" >V(2)</text>
<rect x="687.7" y="465.9" width="32" height="1.5" fill="#d88080"/>
<rect x="805.8" y="95" width="18.7" height="16.8" fill="#cce4f7"/>
<rect x="867.2" y="95" width="18.3" height="16.8" fill="#cce4f7"/>
<rect x="984.2" y="95" width="18.3" height="16.8" fill="#cce4f7"/>
<rect x="704.5" y="96" width="1.1" height="14.5" fill="#9a9a9a"/>
<rect x="784.5" y="96" width="1.1" height="14.5" fill="#9a9a9a"/>
<rect x="864.3" y="96" width="1.1" height="14.5" fill="#9a9a9a"/>
<rect x="925.3" y="96" width="1.1" height="14.5" fill="#9a9a9a"/>
<rect x="1061.6" y="96" width="1.1" height="14.5" fill="#9a9a9a"/>
<rect x="1103.6" y="96" width="1.1" height="14.5" fill="#9a9a9a"/>
<rect x="1145.7" y="96" width="1.1" height="14.5" fill="#9a9a9a"/>
<rect x="1188.6" y="96" width="1.1" height="14.5" fill="#9a9a9a"/>
<path d="M667.6 107.6 V99.8 H671.6 L672.6 100.8 H676.4 V103.4" fill="#f2f0b8" stroke="#141414" stroke-width="1.3"/>
<path d="M667.8 107.6 L670.6 103.4 H679 L676.2 107.6 Z" fill="#e6e48a" stroke="#141414" stroke-width="1.3"/>
<path d="M675.5 98.2 Q677.5 96.6 679.6 98.6" fill="none" stroke="#777" stroke-width="1"/><circle cx="679.3" cy="99.4" r="1.2" fill="#111"/>
<rect x="688.8" y="97.8" width="9.6" height="10.4" fill="#f6f4c4"/>
<path d="M688.8 97.8 V108.2" stroke="#c8c8d8" stroke-width="1"/><path d="M689 108.3 H698.3 V97.8" fill="none" stroke="#111" stroke-width="1.4"/>
<rect x="690.5" y="98.6" width="6" height="4.6" fill="#eeeeaa"/><rect x="691.6" y="105.3" width="4" height="2.6" fill="#222"/>
<path d="M712.6 103 Q717 98 720.5 98.6 Q723.5 99.5 722.6 103 Q722 105.5 718.2 108.3" fill="none" stroke="#1414b8" stroke-width="2.1"/>
<path d="M710.4 97.4 L712.6 97.4 L712.6 102 L717.3 102.2 L717.3 104.6 L710.4 104.6 Z" fill="#1414b8"/>
<path d="M730.6 97.6 L738.4 107 M738.8 98.4 L731.3 107" stroke="#151515" stroke-width="1.1"/>
<circle cx="731.4" cy="106.6" r="1" fill="#222"/><circle cx="738.2" cy="106.6" r="1" fill="#333"/><circle cx="735" cy="102" r="0.9" fill="#000"/>
<path d="M748.4 97.6 H752.8 L753.8 98.6 V104.6 H748.4 Z" fill="#fff" stroke="#111" stroke-width="1.2"/>
<path d="M749.6 101.6 H752 M749.6 103 H752" stroke="#999" stroke-width="0.8"/>
<path d="M753.4 100.2 H757.6 L759.8 102.4 V107.8 H753.4 Z" fill="#fff" stroke="#1c1c40" stroke-width="1.2"/>
<path d="M754.8 105 H758.4" stroke="#222" stroke-width="1.2"/><path d="M754.8 106.6 H758.4" stroke="#888" stroke-width="0.8"/>
<path d="M767.8 99 H770.5 V98 H775.5 V99 H778 V107.6 H767.8 Z" fill="#d0d0d0" stroke="#a8a8a8" stroke-width="1.1"/>
<rect x="772.2" y="103" width="6.2" height="4.6" fill="#e8e8e8" stroke="#b0b0b0" stroke-width="0.9"/>
<rect x="790.5" y="98" width="10" height="9.6" fill="#f8d8d8"/>
<path d="M794 98 V107.6 M797.3 98 V107.6" stroke="#d89a9a" stroke-width="0.9"/>
<path d="M790.5 97.6 V107.8 M800.6 97.6 V107.8 M790.4 101.4 H800.8 M790.4 104.4 H800.8 M790.4 107.5 H800.8" stroke="#5a1414" stroke-width="1.2"/>
<rect x="810.6" y="98.2" width="9.8" height="9.2" fill="#a6dc8c" stroke="#1c2a3c" stroke-width="1.3"/>
<rect x="811.3" y="98.9" width="8.4" height="1.9" fill="#f6f0f0"/><path d="M811.3 101 H819.7" stroke="#6a3a3a" stroke-width="0.8"/>
<path d="M834 108 V100 M837.4 108 V98.2" stroke="#7a6a6a" stroke-width="1"/><rect x="832" y="100" width="5.5" height="7.6" fill="#f6e8e8"/>
<path d="M828.4 97.4 V108 M831.5 98.6 V108 M837.6 98.2 V108 M828 107.7 H838.4" stroke="#141414" stroke-width="1.3"/>
<rect x="846.8" y="97.8" width="7.6" height="6.6" fill="#fff" stroke="#222" stroke-width="1.4"/>
<rect x="850.2" y="101.2" width="7.6" height="7" fill="#000"/><rect x="851.2" y="102.2" width="3" height="2" fill="#fff"/>
<path d="M869.8 105.6 Q873.5 104.5 875.6 103.2 L878.2 98.6 L882.6 105.2" fill="none" stroke="#7a4a6a" stroke-width="1.4"/>
<circle cx="889.6" cy="105.5" r="2.2" fill="#f4b8b8"/><circle cx="889.6" cy="105.5" r="1.5" fill="#7a1020"/>
<circle cx="895.2" cy="99.2" r="2.2" fill="#f4b8b8"/><circle cx="895.2" cy="99.2" r="1.5" fill="#7a1020"/>
<circle cx="899.5" cy="105" r="2.2" fill="#f4b8b8"/><circle cx="899.5" cy="105" r="1.5" fill="#7a1020"/>
<path d="M908.6 105.5 L914.2 99 L918.6 105" fill="none" stroke="#8a3040" stroke-width="1.1"/>
<circle cx="908.6" cy="105.5" r="2.2" fill="#f4b8b8"/><circle cx="908.6" cy="105.5" r="1.5" fill="#7a1020"/>
<circle cx="914.2" cy="99" r="2.2" fill="#f4b8b8"/><circle cx="914.2" cy="99" r="1.5" fill="#7a1020"/>
<circle cx="918.6" cy="105" r="2.2" fill="#f4b8b8"/><circle cx="918.6" cy="105" r="1.5" fill="#7a1020"/>
<path d="M939.7 105.3 l2.4 2.6" stroke="#1a1a50" stroke-width="2.4" stroke-linecap="round"/>
<circle cx="936.1" cy="101.7" r="4.3" fill="#fbe8ea" stroke="#1a1a1a" stroke-width="1.2"/>
<path d="M933.9 101.7 h4.4 M936.1 99.5 v4.4" stroke="#7a1018" stroke-width="1.6"/>
<path d="M958.4 105.3 l2.4 2.6" stroke="#1a1a50" stroke-width="2.4" stroke-linecap="round"/>
<circle cx="954.8" cy="101.7" r="4.3" fill="#eaf8ea" stroke="#1a1a1a" stroke-width="1.2"/>
<path d="M952.6 101.7 h4.4" stroke="#3a7a2a" stroke-width="1.6"/>
<path d="M977.6 105.3 l2.4 2.6" stroke="#c8c8c8" stroke-width="2.4" stroke-linecap="round"/>
<circle cx="974" cy="101.7" r="4.3" fill="#f0f0f0" stroke="#c4c4c4" stroke-width="1.2"/>
<path d="M993.8 99.6 H999.8 V107.6 H993.8" fill="none" stroke="#222" stroke-width="1.2"/>
<path d="M995.8 104.5 l3 3" stroke="#98a030" stroke-width="1.4"/>
<circle cx="992.8" cy="101" r="4" fill="#fff" stroke="#1a1a2a" stroke-width="1.2"/>
<rect x="991.3" y="99.2" width="3" height="3.6" fill="none" stroke="#3a3a7a" stroke-width="0.9"/>
<path d="M1012.5 99.6 H1018.5 V107.6 H1012.5" fill="none" stroke="#222" stroke-width="1.2"/>
<path d="M1014.5 104.5 l3 3" stroke="#98a030" stroke-width="1.4"/>
<circle cx="1011.5" cy="101" r="4" fill="#fff" stroke="#1a1a2a" stroke-width="1.2"/>
<path d="M1008.9 101 l2 -1.8 v3.6 z M1014.1 101 l-2 -1.8 v3.6 z" fill="#1a1aa0"/>
<path d="M1030.5 99.6 H1036.5 V107.6 H1030.5" fill="none" stroke="#222" stroke-width="1.2"/>
<path d="M1032.5 104.5 l3 3" stroke="#98a030" stroke-width="1.4"/>
<circle cx="1029.5" cy="101" r="4" fill="#fff" stroke="#1a1a2a" stroke-width="1.2"/>
<path d="M1029.5 98.4 l-1.8 2 h3.6 z M1029.5 103.6 l-1.8 -2 h3.6 z" fill="#1a1aa0"/>
<path d="M1045.4 103.6 L1047 105.8 Q1048.5 108 1050.5 108 H1052 Q1054.6 108 1054.6 105 V100.5 Q1054.6 99.4 1053.6 99.4 Q1052.8 99.4 1052.8 100.5 V99 Q1052.8 97.9 1051.8 97.9 Q1050.8 97.9 1050.8 99 V98.4 Q1050.8 97.3 1049.8 97.3 Q1048.8 97.3 1048.8 98.4 V99.6 Q1048.8 98.6 1047.9 98.6 Q1047 98.6 1047 99.6 V104.4 L1046.5 103.4 Q1045.6 102.5 1045.4 103.6 Z" fill="#fff" stroke="#111" stroke-width="1.1"/>
<text x="1073.6" y="107.4" font-size="12.5" font-weight="bold" font-family="'Liberation Serif', serif" text-anchor="middle" fill="#111">A</text>
<text x="1092.3" y="103.6" font-size="6.5" font-family="'Liberation Sans', sans-serif" text-anchor="middle" fill="#c4c4c4">(x,y)</text><circle cx="1087.3" cy="107" r="0.8" fill="#bbb"/>
<path d="M1110 107 L1120 97.6 M1110.5 101 Q1114 98 1116.5 101 Q1118.5 104 1121.2 104.6" fill="none" stroke="#6a3a8a" stroke-width="1.2"/>
<path d="M1128.6 97.4 V108 M1131.8 98 V108" stroke="#1a1a1a" stroke-width="1.8"/><path d="M1128 99.6 H1132.6 M1128 103 H1132.6 M1128 106.2 H1132.6" stroke="#fff" stroke-width="0.7"/>
<path d="M1133.6 99.8 H1136.6 L1140.6 103.6 L1136.6 107.4 H1133.6" fill="#fde8e8" stroke="#222" stroke-width="1"/>
<path d="M1137 101.6 L1140 103.6 L1137 105.6 Z" fill="#e02424"/>
<path d="M1154.2 97.6 H1160.2 L1163.6 101 V108 H1154.2 Z" fill="#fff" stroke="#141414" stroke-width="1.2"/>
<path d="M1155 102 H1163 M1155 104.5 H1163 M1157.5 99 V107.5 M1160.5 101.5 V107.5" stroke="#b0b0b0" stroke-width="0.8"/>
<path d="M1151.4 99.8 V106.6 L1154.4 103.2 Z" fill="#1a70c0" stroke="#104080" stroke-width="0.6"/>
<path d="M1172.4 97.6 H1178.6 L1182.2 101 V108 H1172.4 Z" fill="#f2eca0" stroke="#141414" stroke-width="1.2"/>
<path d="M1170.2 99.8 V106.6 L1173.2 103.2 Z" fill="#1a70c0" stroke="#104080" stroke-width="0.6"/><path d="M1175.6 102.6 L1178.4 103.8 L1175.6 105 Z" fill="#2a2a10"/>
<rect x="1196.1" y="99.6" width="8" height="7" fill="#a4a4a4"/>
</svg>
</body></html>
